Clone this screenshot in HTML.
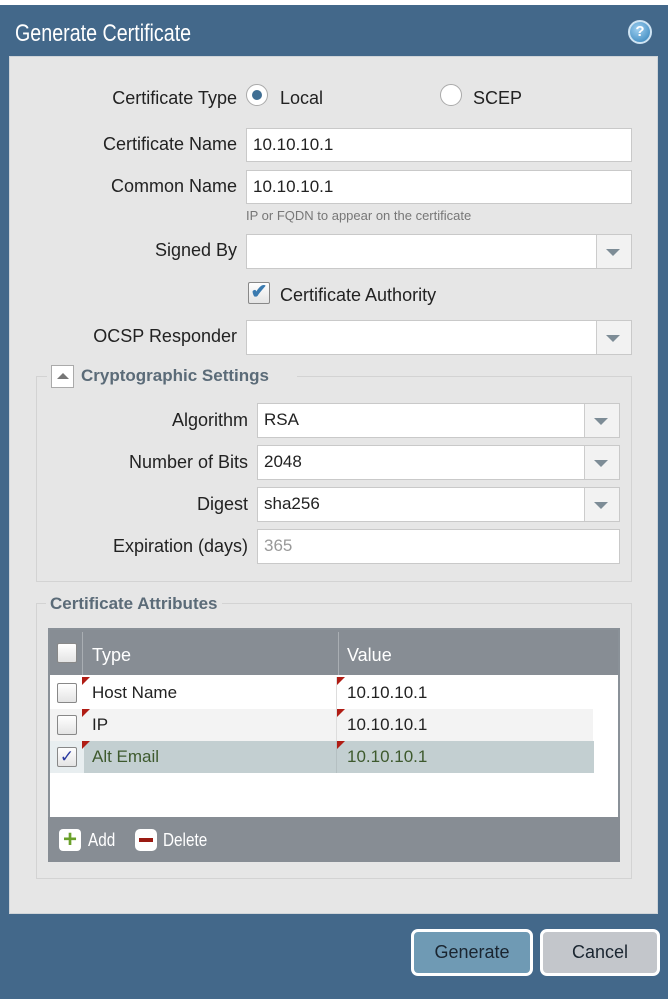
<!DOCTYPE html>
<html><head><style>
*{box-sizing:border-box;margin:0;padding:0}
body{width:668px;height:999px;background:#43688a;font-family:"Liberation Sans",sans-serif;position:relative;overflow:hidden;color:#222}
.a{position:absolute}
.dlg{left:0;top:5px;width:668px;height:994px;background:#43688a}
.title{left:15px;top:20px;font-size:24px;color:#fff;transform:scaleX(0.82);transform-origin:left top;white-space:nowrap}
.panel{left:9px;top:56px;width:649px;height:858px;background:#e6e6e6;border:1px solid #cfd4d8}
.lbl{text-align:right;width:240px;font-size:18px}
.inp{background:#fff;border:1px solid #c9c9c9;font-size:17px;padding:0 6px;line-height:32px}
.sel{background:#fff;border:1px solid #c9c9c9}
.sel:after{content:"";position:absolute;right:0;top:0;width:34px;height:100%;border-left:1px solid #ccc;background:#f2f2f2}
.arr{position:absolute;right:11px;top:14px;width:0;height:0;border-left:7px solid transparent;border-right:7px solid transparent;border-top:7px solid #7d8c96;z-index:2}
.fs{border:1px solid #d3d3d3}
.leg{font-weight:bold;font-size:17px;color:#5b6b78;background:#e6e6e6;padding:0 4px}
.cb{width:20px;height:20px;border:1px solid #888;background:linear-gradient(#fff,#e4e4e4);border-radius:2px}
.tri{position:absolute;left:0;top:0;width:0;height:0;border-top:8px solid #b01c14;border-right:8px solid transparent}
.cell{font-size:17px;line-height:31px}
.btn{border:3px solid #fff;border-radius:7px;font-size:18px;text-align:center;line-height:40px}
</style></head><body>
<div class="a" style="left:0;top:0;width:668px;height:5px;background:#fff"></div>
<div class="a dlg"></div>
<div class="a title">Generate Certificate</div>
<div class="a" style="left:628px;top:20px;width:24px;height:24px;border-radius:50%;background:radial-gradient(circle at 40% 35%,#9fd0f0,#2f7fb8);border:2px solid #cfe4f3;color:#fff;font-weight:bold;font-size:15px;text-align:center;line-height:20px">?</div>
<div class="a panel"></div>

<div class="a lbl" style="left:-3px;top:88px">Certificate Type</div>
<div class="a" style="left:246px;top:84px;width:22px;height:22px;border-radius:50%;background:#fff;border:1px solid #aaa"><div style="margin:5px;width:10px;height:10px;border-radius:50%;background:#3f6e93"></div></div>
<div class="a lbl" style="left:280px;top:88px;text-align:left">Local</div>
<div class="a" style="left:440px;top:84px;width:22px;height:22px;border-radius:50%;background:#fff;border:1px solid #aaa"></div>
<div class="a lbl" style="left:473px;top:88px;text-align:left">SCEP</div>

<div class="a lbl" style="left:-3px;top:134px">Certificate Name</div>
<div class="a inp" style="left:246px;top:128px;width:386px;height:34px">10.10.10.1</div>
<div class="a lbl" style="left:-3px;top:176px">Common Name</div>
<div class="a inp" style="left:246px;top:170px;width:386px;height:34px">10.10.10.1</div>
<div class="a" style="left:246px;top:208px;font-size:13px;color:#777">IP or FQDN to appear on the certificate</div>

<div class="a lbl" style="left:-3px;top:240px">Signed By</div>
<div class="a sel" style="left:246px;top:234px;width:386px;height:35px"><div class="arr"></div></div>
<div class="a cb" style="left:248px;top:282px;width:22px;height:22px;color:#3b7bb0;font-size:20px;line-height:18px;text-align:center;font-weight:bold">✔</div>
<div class="a lbl" style="left:280px;top:285px;text-align:left;width:200px">Certificate Authority</div>
<div class="a lbl" style="left:-3px;top:326px">OCSP Responder</div>
<div class="a sel" style="left:246px;top:320px;width:386px;height:35px"><div class="arr"></div></div>

<div class="a fs" style="left:36px;top:376px;width:596px;height:206px"></div>
<div class="a" style="left:47px;top:363px;width:250px;height:26px;background:#e6e6e6"></div>
<div class="a" style="left:51px;top:365px;width:23px;height:23px;background:#fff;border:1px solid #aaa"><div style="margin:7px 0 0 5px;width:0;height:0;border-left:6px solid transparent;border-right:6px solid transparent;border-bottom:6px solid #777"></div></div>
<div class="a leg" style="left:77px;top:366px">Cryptographic Settings</div>

<div class="a lbl" style="left:8px;top:410px">Algorithm</div>
<div class="a sel inp" style="left:257px;top:403px;width:363px;height:35px">RSA<div class="arr"></div></div>
<div class="a lbl" style="left:8px;top:452px">Number of Bits</div>
<div class="a sel inp" style="left:257px;top:445px;width:363px;height:35px">2048<div class="arr"></div></div>
<div class="a lbl" style="left:8px;top:494px">Digest</div>
<div class="a sel inp" style="left:257px;top:487px;width:363px;height:35px">sha256<div class="arr"></div></div>
<div class="a lbl" style="left:8px;top:536px">Expiration (days)</div>
<div class="a inp" style="left:257px;top:529px;width:363px;height:35px;color:#999">365</div>

<div class="a fs" style="left:36px;top:603px;width:596px;height:276px"></div>
<div class="a leg" style="left:46px;top:594px">Certificate Attributes</div>

<div class="a" style="left:48px;top:628px;width:572px;height:234px;background:#fff;border:2px solid #8a9198"></div>
<div class="a" style="left:50px;top:630px;width:568px;height:45px;background:#878d94"></div>
<div class="a" style="left:82px;top:632px;width:1px;height:43px;background:#a9aeb3"></div>
<div class="a" style="left:338px;top:632px;width:1px;height:43px;background:#a9aeb3"></div>
<div class="a cb" style="left:57px;top:643px"></div>
<div class="a" style="left:92px;top:645px;color:#fff;font-size:18px">Type</div>
<div class="a" style="left:347px;top:645px;color:#fff;font-size:18px">Value</div>

<div class="a" style="left:50px;top:677px;width:543px;height:32px;background:#fff"></div>
<div class="a" style="left:50px;top:709px;width:543px;height:32px;background:#f3f3f3"></div>
<div class="a" style="left:84px;top:741px;width:510px;height:32px;background:#c3cfd1"></div>
<div class="a" style="left:50px;top:741px;width:34px;height:32px;background:#e8eef0"></div>
<div class="a cb" style="left:57px;top:683px"></div>
<div class="a cb" style="left:57px;top:715px"></div>
<div class="a cb" style="left:57px;top:747px;color:#2a3aa0;font-size:17px;line-height:18px;text-align:center">✓</div>
<div class="a" style="left:82px;top:677px;width:256px;height:32px"><div class="tri"></div></div>
<div class="a" style="left:82px;top:709px;width:256px;height:32px"><div class="tri"></div></div>
<div class="a" style="left:82px;top:741px;width:256px;height:32px"><div class="tri"></div></div>
<div class="a" style="left:336px;top:677px;width:256px;height:32px;border-left:1px solid #ddd"><div class="tri"></div></div>
<div class="a" style="left:336px;top:709px;width:256px;height:32px;border-left:1px solid #ddd"><div class="tri"></div></div>
<div class="a" style="left:336px;top:741px;width:256px;height:32px;border-left:1px solid #b5c0c2"><div class="tri"></div></div>
<div class="a cell" style="left:92px;top:677px">Host Name</div>
<div class="a cell" style="left:347px;top:677px">10.10.10.1</div>
<div class="a cell" style="left:92px;top:709px">IP</div>
<div class="a cell" style="left:347px;top:709px">10.10.10.1</div>
<div class="a cell" style="left:92px;top:741px;color:#3e5a2e">Alt Email</div>
<div class="a cell" style="left:347px;top:741px;color:#3e5a2e">10.10.10.1</div>

<div class="a" style="left:48px;top:817px;width:572px;height:45px;background:#878d94"></div>
<div class="a" style="left:59px;top:829px;width:22px;height:22px;background:#fff;border-radius:4px;color:#6aa02a;font-weight:bold;font-size:24px;line-height:21px;text-align:center">+</div>
<div class="a" style="left:88px;top:830px;color:#fff;font-size:18px;transform:scaleX(0.85);transform-origin:left">Add</div>
<div class="a" style="left:135px;top:829px;width:22px;height:22px;background:#fff;border-radius:5px"><div style="margin:9px 0 0 4px;width:14px;height:4px;background:#9a1a12"></div></div>
<div class="a" style="left:163px;top:830px;color:#fff;font-size:18px;transform:scaleX(0.85);transform-origin:left">Delete</div>

<div class="a btn" style="left:411px;top:929px;width:122px;height:47px;background:#6f9ab4;color:#1a2530">Generate</div>
<div class="a btn" style="left:540px;top:929px;width:120px;height:47px;background:#c3c6cb;color:#1a2530">Cancel</div>
</body></html>
